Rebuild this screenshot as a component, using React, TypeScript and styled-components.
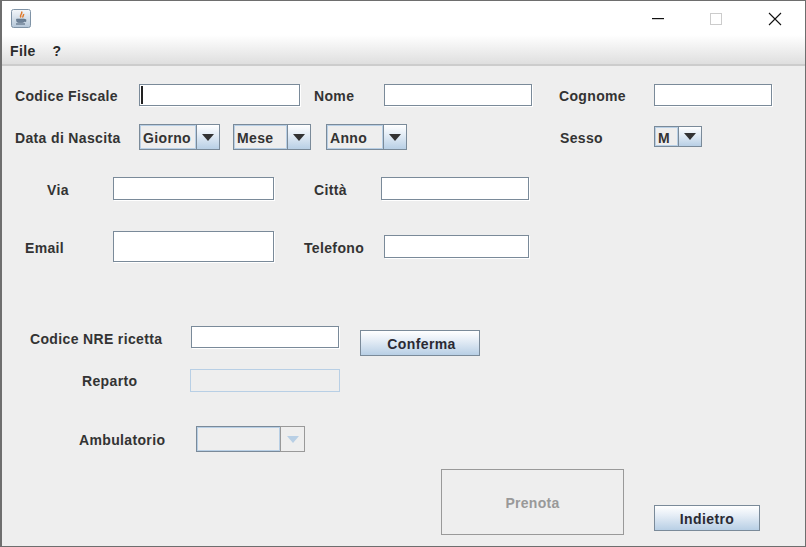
import React from "react";
import styled, { createGlobalStyle } from "styled-components";

const Global = createGlobalStyle`
  html, body { margin: 0; padding: 0; background: #fff; overflow: hidden; }
  * { box-sizing: border-box; }
`;

const Win = styled.div`
  width: 806px;
  height: 547px;
  border: 1px solid #6e6e6e;
  border-left-width: 2px;
  background: #eeeeee;
  font-family: "Liberation Sans", Arial, sans-serif;
  font-weight: 700;
  font-size: 14px;
  color: #333333;
  display: flex;
  flex-direction: column;
`;

const Head = styled.div`
  height: 65px;
  flex: none;
  border-bottom: 2px solid #cccccc;
  background: linear-gradient(to bottom, #ffffff 0, #ffffff 34px, #e2e2e2 60px, #dedede 100%);
  display: flex;
  flex-direction: column;
`;

const TitleBar = styled.div`
  height: 35px;
  flex: none;
  display: flex;
  align-items: flex-start;
  padding-left: 9px;
`;

const AppIcon = styled.svg`
  margin-top: 8px;
  flex: none;
`;

const WinControls = styled.div`
  margin-left: auto;
  display: flex;
`;

const WinBtn = styled.svg<{ $top: number; $gap: number }>`
  display: block;
  flex: none;
  margin-top: ${(p) => p.$top}px;
  margin-right: ${(p) => p.$gap}px;
`;

const MenuBar = styled.div`
  display: flex;
  padding: 7px 0 0 8px;
  gap: 17px;
  color: #2a2a2a;
  line-height: 16px;
  letter-spacing: 0.35px;
`;

const Form = styled.div`
  flex: 1;
  display: flex;
  flex-direction: column;
`;

const Row = styled.div<{ $mt: number; $h: number }>`
  display: flex;
  align-items: flex-start;
  flex: none;
  margin-top: ${(p) => p.$mt}px;
  height: ${(p) => p.$h}px;
`;

const Label = styled.div<{ $x: number; $w: number; $y: number }>`
  margin-left: ${(p) => p.$x}px;
  width: ${(p) => p.$w}px;
  margin-top: ${(p) => p.$y}px;
  line-height: 16px;
  white-space: nowrap;
  flex: none;
  letter-spacing: 0.35px;
`;

const Field = styled.div<{ $x: number; $w: number; $h: number; $y?: number }>`
  position: relative;
  flex: none;
  margin-left: ${(p) => p.$x}px;
  margin-top: ${(p) => p.$y ?? 0}px;
  width: ${(p) => p.$w}px;
  height: ${(p) => p.$h}px;
  background: #ffffff;
  border: 1px solid #7a8a99;
  box-shadow: 1px 1px 0 #ffffff;
`;

const Caret = styled.span`
  position: absolute;
  left: 1px;
  top: 1px;
  bottom: 1px;
  width: 2px;
  background: #222;
`;

const DisabledField = styled.div<{ $x: number; $w: number; $h: number }>`
  flex: none;
  margin-left: ${(p) => p.$x}px;
  width: ${(p) => p.$w}px;
  height: ${(p) => p.$h}px;
  border: 1px solid #b8cfe5;
  background: #eeeeee;
`;

const Combo = styled.div<{ $x: number; $w: number; $h: number; $y?: number }>`
  flex: none;
  display: flex;
  margin-left: ${(p) => p.$x}px;
  margin-top: ${(p) => p.$y ?? 0}px;
  width: ${(p) => p.$w}px;
  height: ${(p) => p.$h}px;
`;

const ComboText = styled.div`
  flex: 1;
  min-width: 0;
  border: 1px solid #7a8a99;
  border-right: 0;
  box-shadow: inset 0 0 0 1px #b8cfe5;
  background: #eeeeee;
  padding: 2px 0 0 3px;
  display: flex;
  align-items: center;
  color: #333333;
  letter-spacing: 0.35px;
`;

const ComboArrow = styled.div<{ $w: number; $off?: boolean }>`
  flex: none;
  width: ${(p) => p.$w}px;
  border: 1px solid ${(p) => (p.$off ? "#999999" : "#7a8a99")};
  background: ${(p) =>
    p.$off ? "#eeeeee" : "linear-gradient(to bottom, #ffffff 0%, #e4edf6 40%, #b8cfe5 100%)"};
  display: flex;
  align-items: center;
  justify-content: center;
  &::after {
    content: "";
    width: 0;
    height: 0;
    border-left: 6px solid transparent;
    border-right: 6px solid transparent;
    border-top: 7px solid ${(p) => (p.$off ? "#b8cfe5" : "#333333")};
  }
`;

const Btn = styled.div<{ $x: number; $w: number; $h: number; $y?: number; $shift?: number }>`
  flex: none;
  margin-left: ${(p) => p.$x}px;
  margin-top: ${(p) => p.$y ?? 0}px;
  width: ${(p) => p.$w}px;
  height: ${(p) => p.$h}px;
  padding: 2px 0 0 ${(p) => p.$shift ?? 0}px;
  border: 1px solid #7a8a99;
  background: linear-gradient(to bottom, #ffffff 0%, #e8eff7 35%, #b8cfe5 100%);
  display: flex;
  align-items: center;
  justify-content: center;
  color: #2a2a33;
  letter-spacing: 0.4px;
`;

const DisabledBtn = styled.div<{ $x: number; $w: number }>`
  flex: none;
  margin-left: ${(p) => p.$x}px;
  width: ${(p) => p.$w}px;
  height: 100%;
  padding-top: 2px;
  border: 1px solid #999999;
  background: #eeeeee;
  color: #999999;
  display: flex;
  align-items: center;
  justify-content: center;
  letter-spacing: 0.3px;
`;

const JavaIcon = () => (
  <AppIcon width="20" height="19" viewBox="0 0 20 19">
    <defs>
      <linearGradient id="jb" x1="0" y1="0" x2="0" y2="1">
        <stop offset="0" stopColor="#f4f7fa" />
        <stop offset="1" stopColor="#b4c6d8" />
      </linearGradient>
    </defs>
    <rect x="0.5" y="0.5" width="19" height="18" rx="2" fill="url(#jb)" stroke="#7f93a6" />
    <path d="M10.5 2.5c1.8 2.2-2.5 3.2-.6 6M12.5 5c.6 1.4-1.4 2-.4 3.5" stroke="#e0792a" strokeWidth="1.5" fill="none" />
    <path d="M5.5 10h8v1.5c0 1.2-1 2-2 2h-4c-1 0-2-.8-2-2zM13.5 10.5h1.5v2h-1.5" fill="#6d8197" stroke="#55697e" strokeWidth="0.5" />
    <path d="M5 15h9" stroke="#55697e" strokeWidth="1.1" />
  </AppIcon>
);

export default function App() {
  return (
    <>
      <Global />
      <Win>
        <Head>
          <TitleBar>
            <JavaIcon />
            <WinControls>
              <WinBtn $top={17} $gap={45} width="14" height="2" viewBox="0 0 14 2">
                <rect x="1" y="0" width="12" height="1.2" fill="#111" />
              </WinBtn>
              <WinBtn $top={12} $gap={46} width="12" height="12" viewBox="0 0 12 12">
                <rect x="0.5" y="0.5" width="11" height="11" fill="none" stroke="#cccccc" />
              </WinBtn>
              <WinBtn $top={11} $gap={23} width="14" height="14" viewBox="0 0 14 14">
                <path d="M1 1l12 12M13 1L1 13" stroke="#111" strokeWidth="1.1" fill="none" />
              </WinBtn>
            </WinControls>
          </TitleBar>
          <MenuBar>
            <span>File</span>
            <span>?</span>
          </MenuBar>
        </Head>
        <Form>
          <Row $mt={18} $h={22}>
            <Label $x={13} $w={124} $y={4}>Codice Fiscale</Label>
            <Field $x={0} $w={161} $h={22}><Caret /></Field>
            <Label $x={14} $w={70} $y={4}>Nome</Label>
            <Field $x={0} $w={148} $h={22} />
            <Label $x={27} $w={95} $y={4}>Cognome</Label>
            <Field $x={0} $w={118} $h={22} />
          </Row>
          <Row $mt={18} $h={26}>
            <Label $x={13} $w={124} $y={6}>Data di Nascita</Label>
            <Combo $x={0} $w={81} $h={26}>
              <ComboText>Giorno</ComboText>
              <ComboArrow $w={24} />
            </Combo>
            <Combo $x={13} $w={78} $h={26}>
              <ComboText>Mese</ComboText>
              <ComboArrow $w={24} />
            </Combo>
            <Combo $x={15} $w={81} $h={26}>
              <ComboText>Anno</ComboText>
              <ComboArrow $w={24} />
            </Combo>
            <Label $x={153} $w={94} $y={6}>Sesso</Label>
            <Combo $x={0} $w={48} $h={21} $y={2}>
              <ComboText>M</ComboText>
              <ComboArrow $w={24} />
            </Combo>
          </Row>
          <Row $mt={27} $h={23}>
            <Label $x={45} $w={66} $y={5}>Via</Label>
            <Field $x={0} $w={161} $h={23} />
            <Label $x={40} $w={67} $y={5}>Città</Label>
            <Field $x={0} $w={148} $h={23} />
          </Row>
          <Row $mt={31} $h={31}>
            <Label $x={23} $w={88} $y={9}>Email</Label>
            <Field $x={0} $w={161} $h={31} />
            <Label $x={30} $w={80} $y={9}>Telefono</Label>
            <Field $x={0} $w={145} $h={23} $y={4} />
          </Row>
          <Row $mt={64} $h={30}>
            <Label $x={28} $w={161} $y={5}>Codice NRE ricetta</Label>
            <Field $x={0} $w={148} $h={22} />
            <Btn $x={21} $w={120} $h={26} $y={4} $shift={3}>Conferma</Btn>
          </Row>
          <Row $mt={13} $h={23}>
            <Label $x={80} $w={108} $y={4}>Reparto</Label>
            <DisabledField $x={0} $w={150} $h={23} />
          </Row>
          <Row $mt={34} $h={26}>
            <Label $x={77} $w={117} $y={6}>Ambulatorio</Label>
            <Combo $x={0} $w={109} $h={26}>
              <ComboText />
              <ComboArrow $w={25} $off />
            </Combo>
          </Row>
          <Row $mt={17} $h={66}>
            <DisabledBtn $x={439} $w={183}>Prenota</DisabledBtn>
            <Btn $x={30} $w={106} $h={26} $y={36}>Indietro</Btn>
          </Row>
        </Form>
      </Win>
    </>
  );
}
